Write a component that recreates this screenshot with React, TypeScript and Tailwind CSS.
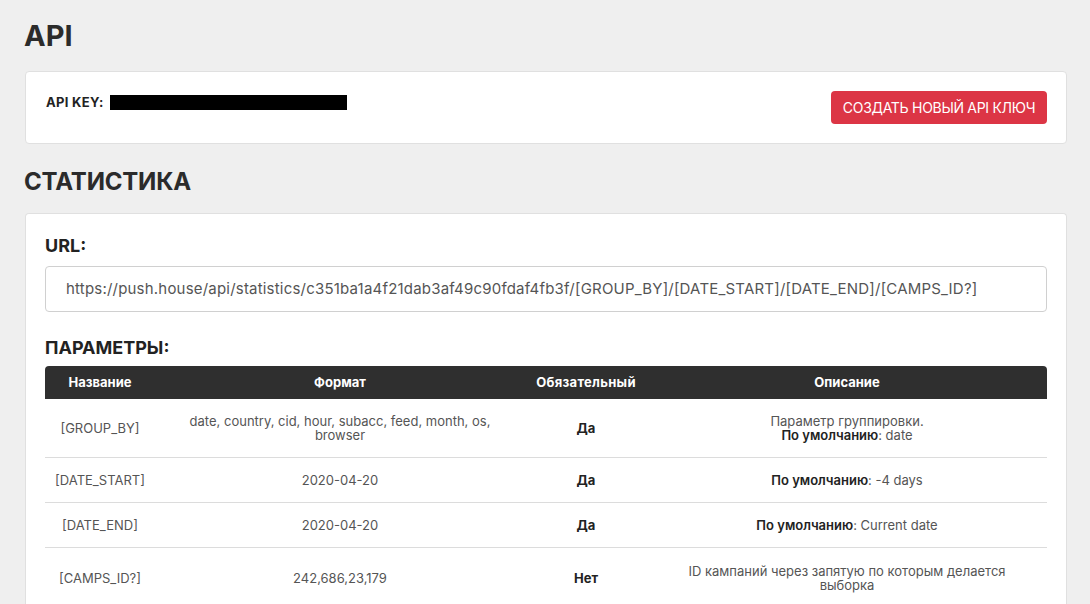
import React from 'react'

const rows = [
  {
    name: '[GROUP_BY]',
    format: 'date, country, cid, hour, subacc, feed, month, os, browser',
    req: 'Да',
    desc: (
      <>
        Параметр группировки.
        <br />
        <b className="font-semibold text-[#222]">По умолчанию</b>: date
      </>
    ),
    h: 'h-[59px]',
  },
  {
    name: '[DATE_START]',
    format: '2020-04-20',
    req: 'Да',
    desc: (
      <>
        <b className="font-semibold text-[#222]">По умолчанию</b>: -4 days
      </>
    ),
    h: 'h-[45px]',
  },
  {
    name: '[DATE_END]',
    format: '2020-04-20',
    req: 'Да',
    desc: (
      <>
        <b className="font-semibold text-[#222]">По умолчанию</b>: Current date
      </>
    ),
    h: 'h-[45px]',
  },
  {
    name: '[CAMPS_ID?]',
    format: '242,686,23,179',
    req: 'Нет',
    desc: <>ID кампаний через запятую по которым делается выборка</>,
    h: 'h-[60px]',
  },
]

export default function App() {
  return (
    <div
      className="min-h-[604px] bg-[#efefef] px-[25px] pt-[18px] text-[#333]"
      style={{ fontFamily: 'Inter, "Noto Sans", sans-serif' }}
    >
      <h1 className="text-[29px] font-bold leading-[36px] text-[#2b2b2b] ml-[-1px]">API</h1>

      <div className="mt-[17px] w-[1042px] rounded-[4px] border border-[#e0e0e0] bg-white px-[20px] pt-[19px] pb-[19px] flex justify-between items-start">
        <div className="flex items-center pt-[2px]">
          <span className="text-[13px] font-bold tracking-[0.3px] text-[#222]">API KEY:</span>
          <span className="ml-[6px] inline-block h-[15px] w-[237px] bg-black" />
        </div>
        <button className="mr-[-1px] h-[33px] w-[216px] rounded-[4px] bg-[#dc3545] text-[14px] text-white tracking-[-0.3px]">
          СОЗДАТЬ НОВЫЙ API КЛЮЧ
        </button>
      </div>

      <h2 className="mt-[23px] text-[24px] font-bold leading-[30px] text-[#2b2b2b] ml-[-1px] tracking-[-0.2px]">СТАТИСТИКА</h2>

      <div className="mt-[16px] w-[1042px] rounded-t-[4px] border border-[#e0e0e0] border-b-0 bg-white px-[19px] pt-[20px] pb-[20px]">
        <div className="text-[18px] font-bold leading-[24px] text-[#222]">URL:</div>
        <div className="mt-[8px] flex h-[46px] w-[1002px] items-center rounded-[4px] border border-[#d0d0d0] px-[20px] text-[15px] tracking-[0.2px] text-[#555] whitespace-nowrap">
          https://push.house/api/statistics/c351ba1a4f21dab3af49c90fdaf4fb3f/[GROUP_BY]/[DATE_START]/[DATE_END]/[CAMPS_ID?]
        </div>

        <div className="mt-[24px] text-[18px] font-bold leading-[24px] text-[#222]">ПАРАМЕТРЫ:</div>
        <div className="mt-[6px] w-[1002px]">
          <div className="grid h-[33px] grid-cols-[110px_370px_122px_400px] items-center rounded-t-[4px] bg-[#2f2f2f] text-center text-[13px] font-bold text-white">
            <div>Название</div>
            <div>Формат</div>
            <div className="tracking-[0.3px]">Обязательный</div>
            <div>Описание</div>
          </div>
          {rows.map((r) => (
            <div
              key={r.name}
              className={`grid ${r.h} grid-cols-[110px_370px_122px_400px] items-center border-b border-[#dcdcdc] text-center text-[13px] leading-[14px] text-[#555]`}
            >
              <div>{r.name}</div>
              <div className="px-[28px]">{r.format}</div>
              <div className="font-bold text-[#222]">{r.req}</div>
              <div className="px-[28px]">{r.desc}</div>
            </div>
          ))}
        </div>
      </div>
    </div>
  )
}
